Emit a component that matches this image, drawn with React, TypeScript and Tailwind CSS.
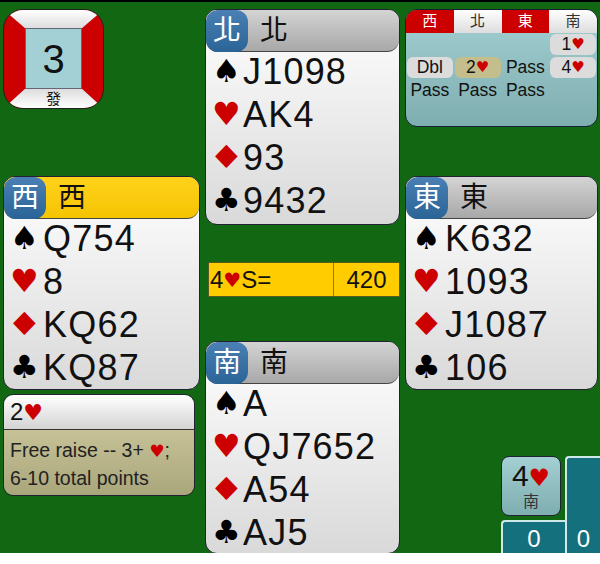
const font = { fontFamily: '"Liberation Sans", "Noto Sans CJK TC", sans-serif' };
const suitFont = { fontFamily: '"DejaVu Sans", sans-serif' };

type SuitRow = { suit: string; red: boolean; cards: string };

const Suit = ({ s, className = "" }: { s: string; className?: string }) => (
  <span className={`text-[#cc0000] ${className}`} style={suitFont}>{s}</span>
);

const HandRows = ({ rows, wide }: { rows: SuitRow[]; wide?: boolean }) => (
  <div className="-mt-[2px] flex flex-col">
    {rows.map((r) => (
      <div key={r.suit} className="flex h-[43px] items-center text-[36px] leading-[43px] text-[#111]">
        <span className={`flex shrink-0 justify-start pl-[6px] ${wide ? "w-[39px]" : "w-[37px]"}`}>
          <span
            className={`inline-block text-[32px] ${r.red ? "text-[#cc0000]" : "text-black"} ${r.suit === "♦" ? "scale-x-125" : ""}`}
            style={suitFont}
          >
            {r.suit}
          </span>
        </span>
        <span className="tracking-[1.2px]">{r.cards}</span>
      </div>
    ))}
  </div>
);

const Hand = ({
  seat,
  rows,
  active,
  wide,
  className = "",
}: {
  seat: string;
  rows: SuitRow[];
  active?: boolean;
  wide?: boolean;
  className?: string;
}) => (
  <div className={`shrink-0 overflow-hidden rounded-[12px] border border-[#223] bg-gradient-to-b from-white to-[#d9d9d9] ${className}`}>
    <div
      className={`flex h-[42px] items-center rounded-b-[12px] border-b border-[#444] ${
        active ? "bg-gradient-to-b from-[#ffd21a] to-[#f5c400]" : "bg-gradient-to-b from-[#d4d4d4] to-[#a8a8a8]"
      }`}
    >
      <span className="flex h-[42px] w-[42px] items-center justify-center rounded-[12px] bg-gradient-to-b from-[#4a80b4] to-[#2a6496] text-[28px] text-white">
        {seat}
      </span>
      <span className="ml-[12px] text-[28px] text-[#111]">{seat}</span>
    </div>
    <HandRows rows={rows} wide={wide} />
  </div>
);

const mk = (s: string, h: string, d: string, c: string): SuitRow[] => [
  { suit: "♠", red: false, cards: s },
  { suit: "♥", red: true, cards: h },
  { suit: "♦", red: true, cards: d },
  { suit: "♣", red: false, cards: c },
];

const Bid = ({ children, kind }: { children: React.ReactNode; kind?: "plain" | "tan" }) => (
  <div
    className={`flex h-[21px] w-[46px] items-center justify-center rounded-[6px] text-[17.5px] text-[#111] ${
      kind === "plain" ? "bg-[#dcdcdc]" : kind === "tan" ? "bg-[#c4bd8c]" : ""
    }`}
  >
    {children}
  </div>
);

const Auction = () => (
  <div className="h-[118px] shrink-0 overflow-hidden rounded-[12px] border border-[#123] bg-gradient-to-b from-[#a3d0d2] to-[#7faeb0]">
    <div className="grid h-[23px] grid-cols-4 border-b border-[#eee] text-[15px]">
      <div className="flex items-center justify-center bg-[#cc0000] text-white">西</div>
      <div className="flex items-center justify-center bg-gradient-to-b from-white to-[#ddd] text-[#333]">北</div>
      <div className="flex items-center justify-center bg-[#cc0000] text-white">東</div>
      <div className="flex items-center justify-center bg-gradient-to-b from-white to-[#ddd] text-[#333]">南</div>
    </div>
    <div className="grid grid-cols-4 justify-items-center gap-y-[2px] pt-[1px]">
      <div />
      <div />
      <div />
      <Bid kind="plain">1<Suit s="♥" className="text-[15px]" /></Bid>
      <Bid kind="plain">Dbl</Bid>
      <Bid kind="tan">2<Suit s="♥" className="text-[15px]" /></Bid>
      <Bid>Pass</Bid>
      <Bid kind="plain">4<Suit s="♥" className="text-[15px]" /></Bid>
      <Bid>Pass</Bid>
      <Bid>Pass</Bid>
      <Bid>Pass</Bid>
    </div>
  </div>
);

const Board = () => (
  <div className="flex h-[100px] w-[101px] shrink-0 flex-col overflow-hidden rounded-[20px] border border-[#222] bg-[#cc0000]">
    <div className="h-[18px] shrink-0 bg-gradient-to-b from-white to-[#ddd] [clip-path:polygon(0_0,100%_0,79%_100%,21%_100%)]" />
    <div className="mx-[21px] flex h-[61px] shrink-0 items-center justify-center border border-[#667] bg-[#a3d0d5] text-[40px] text-[#111]">3</div>
    <div className="flex h-[19px] shrink-0 items-center justify-center bg-gradient-to-b from-[#ddd] to-white text-[15px] leading-none text-[#111] [clip-path:polygon(21%_0,79%_0,100%_100%,0_100%)]">
      發
    </div>
  </div>
);

export default function App() {
  return (
    <div className="h-[564px] w-[600px] overflow-hidden bg-white" style={font}>
      <div className="flex h-[553px] gap-[5px] overflow-hidden border-t-2 border-black bg-[#126712] pl-[3px] pr-[2px] pt-[7px]">
        <div className="flex w-[197px] shrink-0 flex-col">
          <Board />
          <Hand seat="西" active wide className="mt-[67px] h-[214px]" rows={mk("Q754", "8", "KQ62", "KQ87")} />
          <div className="mt-[4px] h-[102px] w-[192px] shrink-0 overflow-hidden rounded-[10px] border border-[#223]">
            <div className="flex h-[35px] items-center border-b border-[#333] bg-gradient-to-b from-white to-[#d4d4d4] pl-[6px] text-[24px] text-[#111]">
              2<Suit s="♥" className="text-[22px]" />
            </div>
            <div className="h-[66px] bg-gradient-to-b from-[#c6c196] to-[#aaa67c] pl-[6px] pt-[7px] text-[19.5px] leading-[27px] text-[#222]">
              Free raise -- 3+ <Suit s="♥" className="text-[17px]" />;<br />6-10 total points
            </div>
          </div>
        </div>

        <div className="flex w-[195px] shrink-0 flex-col">
          <Hand seat="北" className="h-[216px]" rows={mk("J1098", "AK4", "93", "9432")} />
          <div className="ml-[3px] mt-[37px] flex h-[35px] w-[192px] shrink-0 border border-[#5a5a20] bg-[#ffcc00] text-[24px] text-[#111]">
            <div className="flex w-[125px] items-center border-r border-[#8a7a20] pl-[1px]">
              4<Suit s="♥" className="text-[20px]" />S=
            </div>
            <div className="flex flex-1 items-center justify-center">420</div>
          </div>
          <Hand seat="南" className="mt-[44px] h-[213px]" rows={mk("A", "QJ7652", "A54", "AJ5")} />
        </div>

        <div className="flex w-[193px] shrink-0 flex-col">
          <Auction />
          <Hand seat="東" wide className="mt-[49px] h-[214px]" rows={mk("K632", "1093", "J1087", "106")} />
          <div className="-mr-[2px] mt-[66px] flex shrink-0 justify-end">
            <div className="flex w-[64px] flex-col">
              <div className="flex h-[60px] w-[60px] flex-col items-center justify-center rounded-[8px] border border-[#223] bg-gradient-to-b from-[#a3d0d2] to-[#7faeb0] text-[#111]">
                <div className="text-[30px] leading-[30px]">4<Suit s="♥" className="text-[24px]" /></div>
                <div className="text-[16px] leading-[18px] text-[#333]">南</div>
              </div>
              <div className="mt-[4px] flex h-[36px] items-center justify-center rounded-tl-[4px] border-l-2 border-t-2 border-[#cfe8e8] bg-[#14707c] text-[24px] text-white">0</div>
            </div>
            <div className="flex h-[104px] w-[35px] items-end justify-center rounded-tl-[4px] border-l-2 border-t-2 border-[#cfe8e8] bg-[#14707c] pb-[3px] text-[24px] text-white">0</div>
          </div>
        </div>
      </div>
    </div>
  );
}
